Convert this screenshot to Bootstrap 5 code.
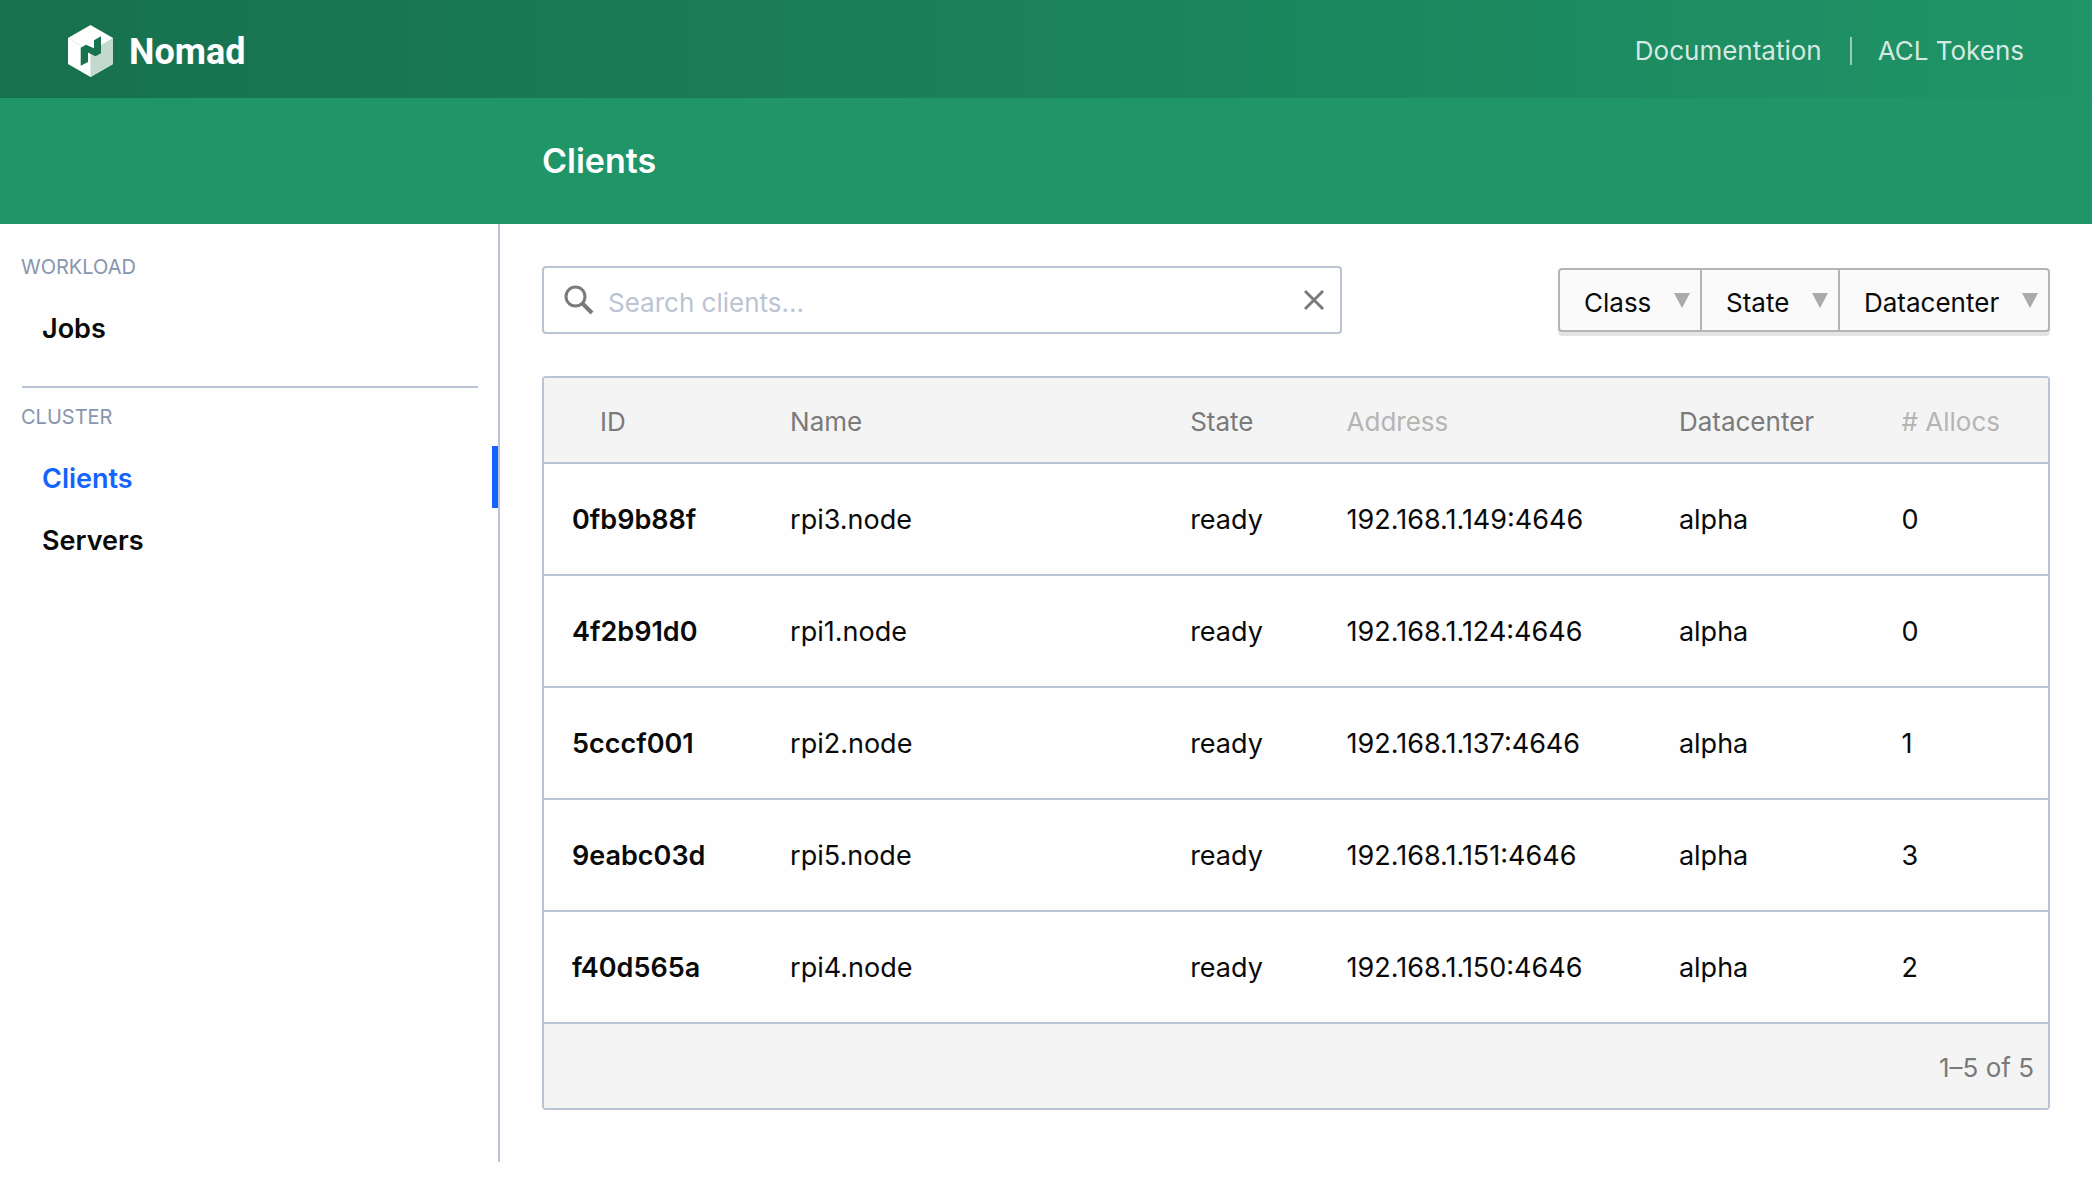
<!DOCTYPE html>
<html lang="en">
<head>
<meta charset="utf-8">
<meta name="viewport" content="width=device-width, initial-scale=1">
<title>Clients - Nomad</title>
<link href="https://cdn.jsdelivr.net/npm/bootstrap@5.3.0/dist/css/bootstrap.min.css" rel="stylesheet">
<style>
  :root { --line: #bac4d3; --green: #209568; --ink: #0a0a0a; }
  body { font: 400 27px/40px Inter, "Liberation Sans", sans-serif; color: var(--ink); background: #fefefe; }
  .top-bar { height: 98px; padding: 3px 68px 0; background: linear-gradient(to right, #17704e, #1f9467); }
  .brand-name { font: 700 36px/52px Roboto, "Liberation Sans", sans-serif; margin-left: 16px; padding-top: 2px; }
  .top-link { font-size: 26px; color: rgba(255,255,255,.82); }
  .top-rule { width: 2px; height: 28px; background: rgba(255,255,255,.55); margin: 0 26px 0 28px; }
  .title-bar { height: 126px; padding-left: 542px; background: var(--green); }
  .title-bar h1 { font-size: 34px; line-height: 44px; font-weight: 600; }
  .page-body { min-height: calc(100vh - 256px); }
  .side-menu { width: 500px; border-right: 2px solid var(--line); padding-top: 25px; }
  .menu-label { font-size: 20px; line-height: 36px; color: #8896ae; margin: 0 21px 11px; text-transform: uppercase; }
  .menu-rule { border-top: 2px solid var(--line); margin: 28px 20px 11px 22px; }
  .side-menu .nav-link { height: 62px; padding: 13px 0 9px 42px; color: var(--ink); font-weight: 600; border-right: 6px solid transparent; }
  .side-menu .nav-link.active { color: #1563ff; border-right-color: #1563ff; }
  .content { padding: 42px; }
  .search-box { width: 800px; height: 68px; border: 2px solid var(--line); border-radius: 4px; padding: 0 15px 0 20px; background: #fff; }
  .search-box input { font-size: 26px; margin-left: 14px; padding: 5px 0 0; color: var(--ink); }
  .search-box input::placeholder { color: #bac4d3; opacity: 1; }
  .facets { border: 2px solid #b5b5b5; border-radius: 4px; background: #fafafa; box-shadow: 0 4px 0 #e4e4e4; }
  .facets select { appearance: none; border: 0; height: 60px; font-size: 26px; line-height: 40px; padding: 6px 48px 0 24px; color: var(--ink);
    background: url("data:image/svg+xml,%3Csvg xmlns='http://www.w3.org/2000/svg' viewBox='0 0 16 15'%3E%3Cpath d='M0 0h16L8 15z' fill='%23aaa'/%3E%3C/svg%3E") right 10px center / 16px 15px no-repeat; }
  .facets select + select { border-left: 2px solid #b5b5b5; }
  .node-box { border: 2px solid var(--line); border-radius: 4px; margin-top: 42px; overflow: hidden; }
  .node-table { table-layout: fixed; border-collapse: separate; border-spacing: 0; --bs-table-bg: transparent; color: var(--ink); }
  .node-table th, .node-table td { border-width: 0 0 2px; border-color: var(--line); padding: 2px 0 0 28px; height: 112px; vertical-align: middle; white-space: nowrap; }
  .node-table thead th { height: 86px; padding-top: 4px; background: #f4f4f4; color: #b5b5b5; font-size: 26px; font-weight: 400; }
  .node-table thead th:first-child { padding-left: 56px; }
  .node-table a { color: #7a7a7a; text-decoration: none; }
  .node-table tbody a { color: var(--ink); font-weight: 600; }
  .table-foot { height: 84px; padding: 4px 14px 0; background: #f4f4f4; color: #7a7a7a; font-size: 26px; }
</style>
<script src="https://cdn.jsdelivr.net/npm/bootstrap@5.3.0/dist/js/bootstrap.bundle.min.js"></script>
</head>
<body>
<header>
  <div class="top-bar d-flex align-items-center justify-content-between">
    <a href="#" class="d-flex align-items-center text-white text-decoration-none">
      <svg width="45" height="52" viewBox="0 0 45 52" aria-hidden="true">
        <path d="M22.500 0 45 13v26L22.500 52 0 39V13z" fill="#fff"/>
        <path d="M45 13v26L22.500 52V26z" fill="#c3d8ce"/>
        <path d="M0 13l13 8" stroke="#c3d8ce" stroke-width="1" stroke-dasharray="1 1"/>
        <path d="M12.700 22.700 18 19.700l8 3.600v-8l7-4v17l-5.500 3-7.500-3.800V37l-7.300 3.700z" fill="#18724f"/>
      </svg>
      <span class="brand-name">Nomad</span>
    </a>
    <nav class="d-flex align-items-center">
      <a href="#" class="top-link text-decoration-none">Documentation</a>
      <span class="top-rule"></span>
      <a href="#" class="top-link text-decoration-none">ACL Tokens</a>
    </nav>
  </div>
  <div class="title-bar d-flex align-items-center text-white">
    <h1 class="m-0">Clients</h1>
  </div>
</header>
<div class="page-body d-flex align-items-stretch">
  <aside class="side-menu flex-shrink-0">
    <p class="menu-label">Workload</p>
    <nav class="nav flex-column"><a class="nav-link" href="#">Jobs</a></nav>
    <div class="menu-rule"></div>
    <p class="menu-label">Cluster</p>
    <nav class="nav flex-column">
      <a class="nav-link active" href="#" aria-current="page">Clients</a>
      <a class="nav-link" href="#">Servers</a>
    </nav>
  </aside>
  <main class="content flex-grow-1">
    <div class="d-flex align-items-center justify-content-between">
      <form class="search-box d-flex align-items-center">
        <label for="search" class="d-flex">
          <svg width="30" height="30" viewBox="0 0 30 30" fill="none" stroke="#7a7a7a" aria-hidden="true"><circle cx="11.500" cy="11.500" r="9.500" stroke-width="3"/><path d="M18.500 18.500 28 28" stroke-width="4"/></svg>
        </label>
        <input id="search" type="text" class="form-control border-0 shadow-none bg-transparent" placeholder="Search clients..." aria-label="Search clients">
        <button type="button" class="btn border-0 p-0 d-flex" aria-label="Clear">
          <svg width="22" height="22" viewBox="0 0 22 22" fill="none" stroke="#7a7a7a" stroke-width="3" aria-hidden="true"><path d="m2 2 18 18M20 2 2 20"/></svg>
        </button>
      </form>
      <div class="facets d-flex">
        <select aria-label="Class"><option>Class</option></select>
        <select aria-label="State"><option>State</option></select>
        <select aria-label="Datacenter"><option>Datacenter</option></select>
      </div>
    </div>
    <div class="node-box">
      <table class="table node-table m-0">
        <colgroup><col style="width:14.5%"><col style="width:26.6%"><col style="width:10.4%"><col style="width:22.1%"><col style="width:14.8%"><col></colgroup>
        <thead>
          <tr><th><a href="#">ID</a></th><th><a href="#">Name</a></th><th><a href="#">State</a></th><th>Address</th><th><a href="#">Datacenter</a></th><th># Allocs</th></tr>
        </thead>
        <tbody>
          <tr><td><a href="#">0fb9b88f</a></td><td>rpi3.node</td><td>ready</td><td>192.168.1.149:4646</td><td>alpha</td><td>0</td></tr>
          <tr><td><a href="#">4f2b91d0</a></td><td>rpi1.node</td><td>ready</td><td>192.168.1.124:4646</td><td>alpha</td><td>0</td></tr>
          <tr><td><a href="#">5cccf001</a></td><td>rpi2.node</td><td>ready</td><td>192.168.1.137:4646</td><td>alpha</td><td>1</td></tr>
          <tr><td><a href="#">9eabc03d</a></td><td>rpi5.node</td><td>ready</td><td>192.168.1.151:4646</td><td>alpha</td><td>3</td></tr>
          <tr><td><a href="#">f40d565a</a></td><td>rpi4.node</td><td>ready</td><td>192.168.1.150:4646</td><td>alpha</td><td>2</td></tr>
        </tbody>
      </table>
      <div class="table-foot d-flex align-items-center justify-content-end">1–5 of 5</div>
    </div>
  </main>
</div>
</body>
</html>
